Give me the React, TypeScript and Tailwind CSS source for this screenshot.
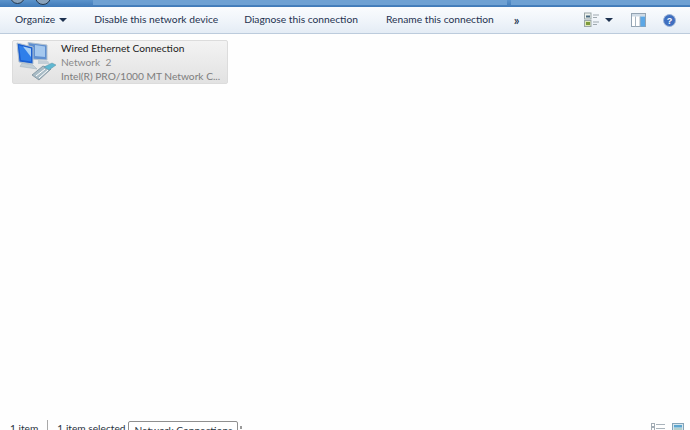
const sans = "font-['Lato',_'Open_Sans',sans-serif]";

function Caret() {
  return <span className="inline-block w-0 h-0 border-x-[4px] border-x-transparent border-t-[4px] border-t-[#1e3250]" />;
}

function NetIcon() {
  return (
    <svg width="44" height="40" viewBox="0 0 44 40">
      <path d="M12 0.5 L31 3 V18 L14 17Z" fill="#5f8fd0" stroke="#b4c2ce" />
      <path d="M19 3 L29 4.5 V15 L19 14Z" fill="#a5c8ee" />
      <path d="M22 18 L32 19 L34 22 L22 22Z" fill="#c4cfd7" />
      <path d="M1 1 L17 5 V22 L3 20Z" fill="#1c5fd0" stroke="#b3c3d0" />
      <path d="M3 3.5 L15 6.5 V19.5 L5 18Z" fill="#2f7fea" />
      <path d="M7 4.5 L15 6.5 V15Z" fill="#a8d0f5" />
      <path d="M6 21 L17 23 L21 27 L4 24.5Z" fill="#c3cfd7" stroke="#a0aeb8" strokeWidth="0.5" />
      <path d="M16 33 L27 24 L35 27 L23 38Z" fill="#a9bcc6" stroke="#6f8492" strokeWidth="0.7" />
      <path d="M28 25 L36 21 L40 23 L33 28Z" fill="#5fb8d2" stroke="#5f8ea0" strokeWidth="0.5" />
      <path d="M20 34 L29 27 M23 36 L32 28" stroke="#fff" strokeWidth="1" />
    </svg>
  );
}

function ViewIcon() {
  return (
    <svg width="16" height="16" viewBox="0 0 16 16">
      <rect x="0.5" y="1" width="6.5" height="6" fill="#eef3ee" stroke="#9aa6a8" />
      <rect x="2" y="3.5" width="4" height="2" fill="#4a6a80" />
      <rect x="0.5" y="8.5" width="6.5" height="6" fill="#dfe8b8" stroke="#9aa6a8" />
      <rect x="2" y="10" width="4" height="3" fill="#7d9a3a" />
      <path d="M9 3H15M9 5.5H13M9 10H15M9 12.5H13" stroke="#9fa9b0" strokeWidth="1" />
    </svg>
  );
}

function PaneIcon() {
  return (
    <svg width="15" height="14" viewBox="0 0 15 14">
      <rect x="0.5" y="0.5" width="14" height="13" fill="#fff" stroke="#93a3b2" />
      <rect x="1" y="1" width="13" height="2.5" fill="#cfdbe6" />
      <rect x="9" y="3.5" width="5" height="10" fill="#5ba7e6" />
      <path d="M4.5 3.5V13.5M9 3.5V13.5" stroke="#a6b4c0" />
    </svg>
  );
}

function HelpIcon() {
  return (
    <svg width="13" height="13" viewBox="0 0 13 13">
      <circle cx="6.5" cy="6.5" r="6" fill="#3f6fc0" stroke="#9db4d6" />
      <text x="6.5" y="10" textAnchor="middle" fontSize="9" fontWeight="700" fill="#fff" fontFamily="Liberation Sans, sans-serif">?</text>
    </svg>
  );
}

function DetailsIcon() {
  return (
    <svg width="14" height="8" viewBox="0 0 14 8">
      <rect x="0.5" y="0.5" width="3" height="3" fill="#fff" stroke="#a3adb5" />
      <rect x="0.5" y="4.5" width="3" height="3" fill="#fff" stroke="#a3adb5" />
      <path d="M5 1.5H14M5 5.5H14" stroke="#a9b3bb" />
    </svg>
  );
}

function TilesIcon() {
  return (
    <svg width="12" height="8" viewBox="0 0 12 8">
      <rect x="0.5" y="0.5" width="11" height="7" fill="#d8e6ee" stroke="#84a4b8" />
      <rect x="2" y="2" width="8" height="2.5" fill="#5ca6cf" />
      <rect x="2" y="5.5" width="8" height="1" fill="#8fb8a8" />
    </svg>
  );
}

export default function App() {
  return (
    <div className={`w-[690px] h-[430px] overflow-hidden flex flex-col bg-[#fefefe] ${sans}`}>
      <div className="h-[7px] shrink-0 flex bg-gradient-to-b from-[#5b93cb] to-[#3f7ab8]">
        <div className="w-[93px] shrink-0 overflow-hidden">
          <div className="flex gap-[10px] pl-[10px] -mt-[11px]">
            <span className="w-[15px] h-[15px] rounded-full bg-[#8aa3bc] border border-[#24384e]" />
            <span className="w-[16px] h-[16px] rounded-full bg-[#8aa3bc] border border-[#24384e]" />
          </div>
        </div>
        <div className="w-[414px] shrink-0 h-[5px] bg-[#6ea1d3]" />
        <div className="w-[4px] shrink-0" />
        <div className="flex-1 h-[5px] bg-[#6ea1d3]" />
      </div>
      <div className="h-[27px] shrink-0 flex items-center bg-gradient-to-b from-[#fafcfe] via-[#f0f5fa] to-[#e4ecf5] border-b border-[#bccbdc] text-[10.25px] text-[#1e3250]">
        <span className="ml-[15px]">Organize</span>
        <span className="ml-[4px] flex"><Caret /></span>
        <span className="ml-[27px]">Disable this network device</span>
        <span className="ml-[26px]">Diagnose this connection</span>
        <span className="ml-[28px]">Rename this connection</span>
        <span className="ml-[20px] text-[13px] font-semibold leading-none">»</span>
        <span className="ml-auto flex items-center">
          <ViewIcon />
          <span className="ml-[5px] mr-[18px] flex"><Caret /></span>
          <PaneIcon />
          <span className="ml-[17px] mr-[14px] flex"><HelpIcon /></span>
        </span>
      </div>
      <div className="flex-1 min-h-0 pt-[6px] pl-[12px]">
        <div className="w-[216px] h-[44px] flex items-center rounded-[2px] border border-[#dcdcdc] bg-gradient-to-b from-[#f3f3f3] to-[#e2e2e2] text-[10.2px] leading-[14px]">
          <span className="ml-[3px] flex"><NetIcon /></span>
          <div className="ml-[1px] flex flex-col whitespace-nowrap">
            <span className="text-[#1c1c1c]">Wired Ethernet Connection</span>
            <span className="text-[#8a8a8a]">Network&nbsp; 2</span>
            <span className="text-[#7d7d7d]">Intel(R) PRO/1000 MT Network C...</span>
          </div>
        </div>
      </div>
      <div className="h-[13px] shrink-0 flex items-start text-[10.2px] leading-[14px] text-[#2a3340]">
        <span className="ml-[10px] pt-[4px]">1 item</span>
        <span className="ml-[9px] mt-[3px] w-px h-[10px] bg-[#a9a9a9]" />
        <span className="ml-[9px] pt-[4px]">1 item selected</span>
        <span className="ml-[3px] mt-[4px] h-[16px] w-[110px] flex justify-center pt-[1px] rounded-t-[2px] border border-[#8f8f8f] bg-white">Network Connections</span>
        <span className="ml-[2px] mt-[9px] w-[2px] h-[3px] bg-[#9a9a9a]" />
        <span className="ml-auto mt-[6px] flex items-start">
          <DetailsIcon />
          <span className="ml-[7px] mr-[6px] flex"><TilesIcon /></span>
        </span>
      </div>
    </div>
  );
}
